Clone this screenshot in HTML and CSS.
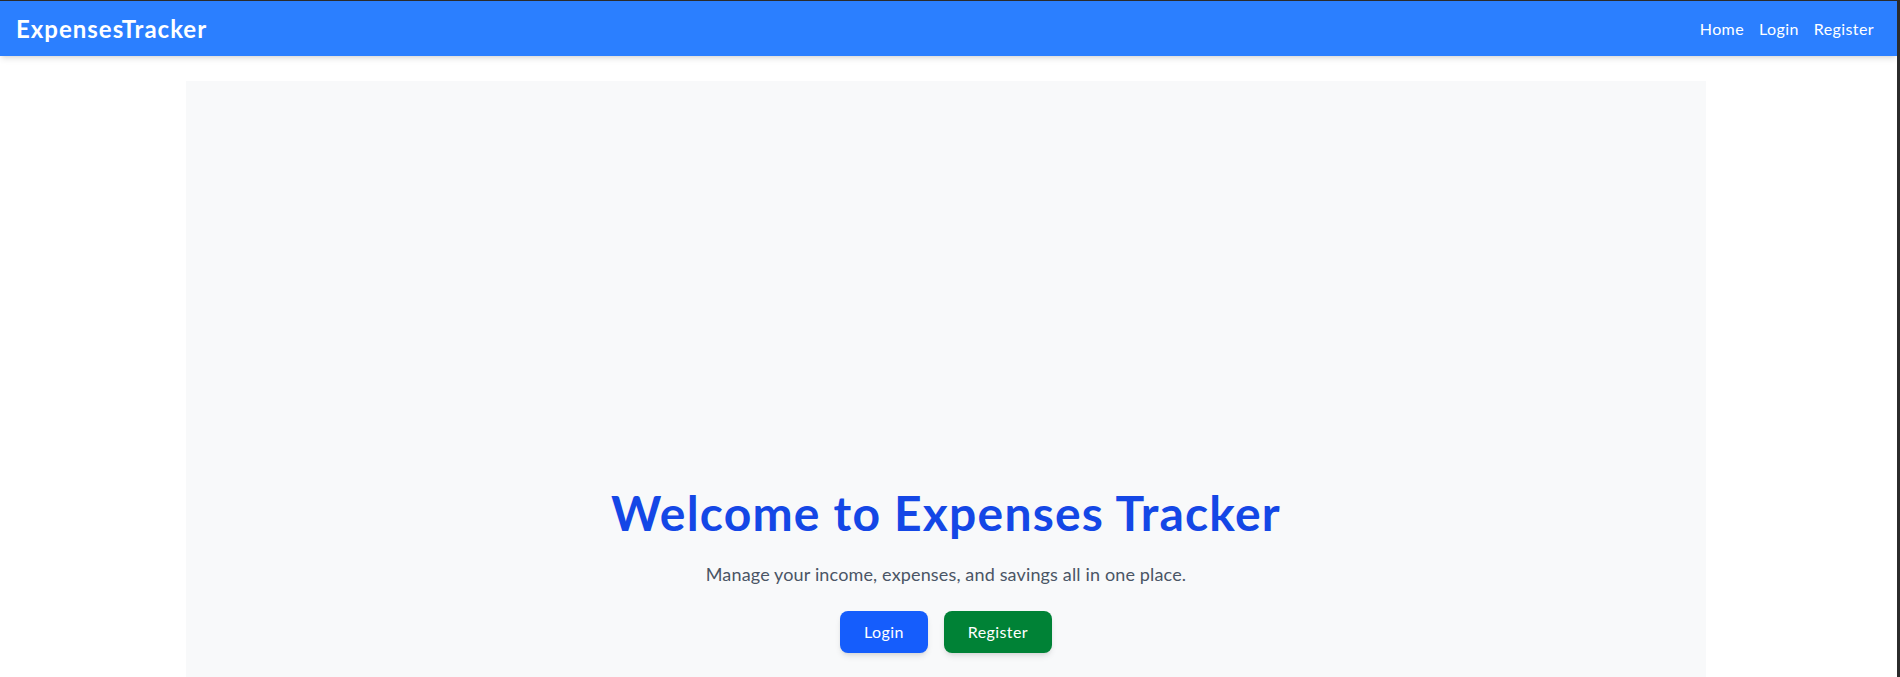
FILE: index.html
```html
<!DOCTYPE html>
<html lang="en">
<head>
<meta charset="utf-8">
<title>ExpensesTracker</title>
<link rel="stylesheet" href="styles.css">
</head>
<body>
<div class="frame">
  <nav class="navbar">
    <a class="brand" href="#">ExpensesTracker</a>
    <div class="nav-links">
      <a href="#">Home</a>
      <a href="#">Login</a>
      <a href="#">Register</a>
    </div>
  </nav>
  <main class="main">
    <section class="hero">
      <h1 class="hero-title">Welcome to Expenses Tracker</h1>
      <p class="hero-text">Manage your income, expenses, and savings all in one place.</p>
      <div class="hero-actions">
        <a class="btn btn-login" href="#">Login</a>
        <a class="btn btn-register" href="#">Register</a>
      </div>
    </section>
  </main>
</div>
</body>
</html>
```

FILE: styles.css
```css
* { box-sizing: border-box; }
html, body { margin: 0; padding: 0; }
body {
  font-family: Lato, "Noto Sans", "Liberation Sans", sans-serif;
  background: #2b2b2b;
  height: 677px;
  overflow: hidden;
}
.frame {
  margin: 1px 3px 0 0;
  background: #ffffff;
  height: 676px;
  overflow: hidden;
}
.navbar {
  height: 55px;
  background: #2b7fff;
  display: flex;
  align-items: center;
  justify-content: space-between;
  padding: 0 23px 0 16px;
  box-shadow: 0 4px 6px -1px rgba(0,0,0,0.1), 0 2px 4px -2px rgba(0,0,0,0.1);
  position: relative;
  z-index: 1;
}
.brand {
  color: #ffffff;
  text-decoration: none;
  font-weight: 700;
  font-size: 24px;
  letter-spacing: 1px;
}
.nav-links {
  display: flex;
  gap: 15px;
}
.nav-links a {
  color: #ffffff;
  text-decoration: none;
  font-size: 16px;
  letter-spacing: 0.4px;
}
.main {
  padding: 25px 5px 0 0;
}
.hero {
  width: 1520px;
  margin: 0 auto;
  background: #f8f9fa;
  text-align: center;
  padding-top: 408px;
  height: 700px;
}
.hero-title {
  margin: 0;
  font-size: 48px;
  line-height: 48px;
  font-weight: 700;
  color: #1447e6;
  letter-spacing: 1.2px;
}
.hero-text {
  margin: 23px 0 0;
  font-size: 18px;
  line-height: 28px;
  color: #4a5565;
  letter-spacing: 0.15px;
}
.hero-actions {
  margin-top: 23px;
  display: flex;
  justify-content: center;
  gap: 16px;
}
.btn {
  display: inline-block;
  color: #ffffff;
  text-decoration: none;
  font-size: 16px;
  line-height: 24px;
  padding: 9px 24px;
  border-radius: 8px;
  letter-spacing: 0.4px;
  box-shadow: 0 4px 6px -1px rgba(0,0,0,0.1), 0 2px 4px -2px rgba(0,0,0,0.1);
}
.btn-login { background: #155dfc; }
.btn-register { background: #008236; }
```
